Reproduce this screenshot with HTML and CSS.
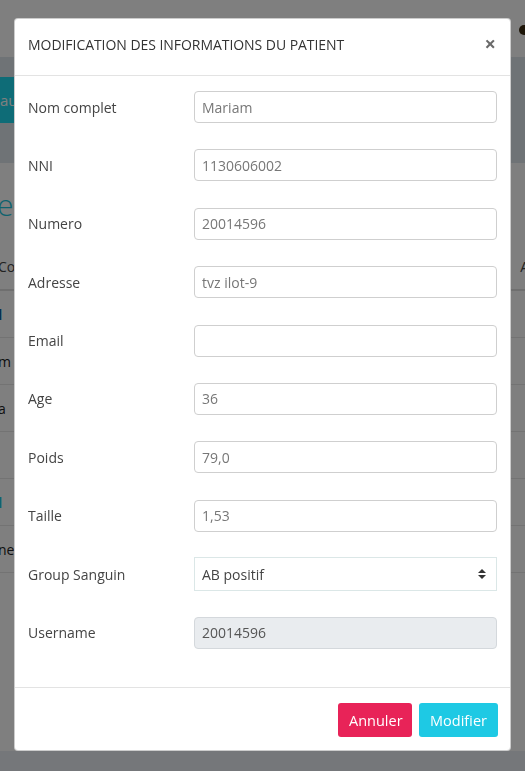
FILE: index.html
```html
<!DOCTYPE html>
<html lang="fr">
<head>
<meta charset="utf-8">
<title>Modification patient</title>
<link rel="stylesheet" href="styles.css">
</head>
<body>
<div class="page">
  <div class="navbar"><span class="avatar"></span></div>
  <div class="band"><span class="btn-new">au</span></div>
  <div class="content">
    <div class="title">e</div>
    <div class="table">
      <div class="tr thead"><span>Co</span><span class="right">A</span></div>
      <div class="tr"><span class="link">l</span></div>
      <div class="tr"><span>m</span></div>
      <div class="tr"><span>a</span></div>
      <div class="tr"><span></span></div>
      <div class="tr"><span class="teal">l</span></div>
      <div class="tr"><span>ne</span></div>
    </div>
  </div>
  <div class="foot"></div>
</div>

<div class="overlay">
  <div class="modal">
    <div class="modal-header">
      <h5 class="modal-title">MODIFICATION DES INFORMATIONS DU PATIENT</h5>
      <span class="close">&times;</span>
    </div>
    <div class="modal-body">
      <div class="row"><label class="lbl">Nom complet</label><div class="input">Mariam</div></div>
      <div class="row"><label class="lbl">NNI</label><div class="input">1130606002</div></div>
      <div class="row"><label class="lbl">Numero</label><div class="input">20014596</div></div>
      <div class="row"><label class="lbl">Adresse</label><div class="input">tvz ilot-9</div></div>
      <div class="row"><label class="lbl">Email</label><div class="input"></div></div>
      <div class="row"><label class="lbl">Age</label><div class="input">36</div></div>
      <div class="row"><label class="lbl">Poids</label><div class="input">79,0</div></div>
      <div class="row"><label class="lbl">Taille</label><div class="input">1,53</div></div>
      <div class="row"><label class="lbl">Group Sanguin</label><div class="input select"><span>AB positif</span>
        <svg class="arrows" width="8" height="10" viewBox="0 0 8 10"><path d="M4 0 L8 4 H0 Z M0 6 H8 L4 10 Z" fill="#333"/></svg></div></div>
      <div class="row"><label class="lbl">Username</label><div class="input disabled">20014596</div></div>
    </div>
    <div class="modal-footer">
      <button class="btn btn-cancel">Annuler</button>
      <button class="btn btn-ok">Modifier</button>
    </div>
  </div>
</div>
</body>
</html>
```

FILE: styles.css
```css
* { box-sizing: border-box; }
html, body { margin: 0; padding: 0; }
body {
  font-family: "Open Sans", "DejaVu Sans", sans-serif;
  font-size: 14px;
  color: #333;
  width: 525px;
  height: 771px;
  overflow: hidden;
  background: #fff;
}
.page { height: 771px; display: flex; flex-direction: column; }
.navbar { height: 57px; background: #fff; display: flex; justify-content: flex-end; align-items: flex-start; }
.avatar { width: 10px; height: 10px; border-radius: 50%; background: #3a2a10; margin: 25px -4px 0 0; }
.band { height: 106px; background: #dfe6ec; padding-top: 20px; }
.btn-new {
  display: block;
  width: 120px;
  height: 46px;
  line-height: 46px;
  background: #1dd9ee;
  color: #fff;
  padding-left: 0;
  font-size: 15px;
}
.content { flex: 1; background: #fff; }
.title {
  margin: 22px 0 0 -3px;
  font-weight: 300;
  font-size: 30px;
  color: #1dc5dc;
  height: 40px;
  line-height: 40px;
}
.table { margin-top: 18px; display: flex; flex-direction: column; }
.tr {
  height: 47px;
  border-bottom: 1px solid #e6e6e6;
  display: flex;
  align-items: center;
  justify-content: space-between;
  font-size: 14px;
  color: #222;
  padding-right: 0;
}
.tr span { margin-left: -2px; }
.thead { height: 48px; border-bottom: 2px solid #dedede; color: #444; }
.thead .right { margin-right: -4px; }
.link { color: #0b5ea0; font-weight: 700; }
.teal { color: #1dc5dc; font-weight: 700; }
.foot { height: 20px; background: #eaeef4; }

.overlay {
  position: fixed;
  inset: 0;
  background: rgba(0, 0, 0, 0.5);
  padding: 18px 14px 0 14px;
}
.modal {
  width: 497px;
  height: 733px;
  background: #fff;
  border: 1px solid rgba(0,0,0,.2);
  border-radius: 4px;
  display: flex;
  flex-direction: column;
}
.modal-header {
  height: 57px;
  border-bottom: 1px solid #e3e3e3;
  display: flex;
  align-items: center;
  justify-content: space-between;
  padding: 0 14px 6px 13px;
}
.modal-title { margin: 0; font-size: 14px; font-weight: 400; color: #333; letter-spacing: -0.05px; }
.close { font-size: 20px; font-weight: 700; color: #6a6a6a; line-height: 1; margin-top: -1px; }
.modal-body {
  flex: 1;
  padding: 15px 13px 0 13px;
  display: flex;
  flex-direction: column;
  gap: 26.4px;
}
.row { display: flex; align-items: center; height: 32px; }
.lbl { width: 166px; color: #444; font-size: 14px; }
.input {
  width: 303px;
  height: 32px;
  border: 1px solid #cfcfcf;
  border-radius: 4px;
  padding: 0 7px;
  display: flex;
  align-items: center;
  color: #777;
  font-size: 14px;
}
.select { border-color: #dbe7e7; border-radius: 0; color: #444; justify-content: space-between; padding-right: 10px; height: 34px; }
.disabled { background: #e9ecef; border-color: #d4d8dc; color: #555; }
.modal-footer {
  height: 63px;
  border-top: 1px solid #e3e3e3;
  display: flex;
  justify-content: flex-end;
  align-items: center;
  gap: 7px;
  padding: 2px 12px 0 0;
}
.btn {
  height: 34px;
  border: none;
  border-radius: 3px;
  color: #fff;
  font-family: "Open Sans", "DejaVu Sans", sans-serif;
  font-size: 14.5px;
  padding: 0 11px;
}
.btn-cancel { background: #e82358; width: 74px; }
.btn-ok { background: #1ec9e4; width: 79px; }
```
